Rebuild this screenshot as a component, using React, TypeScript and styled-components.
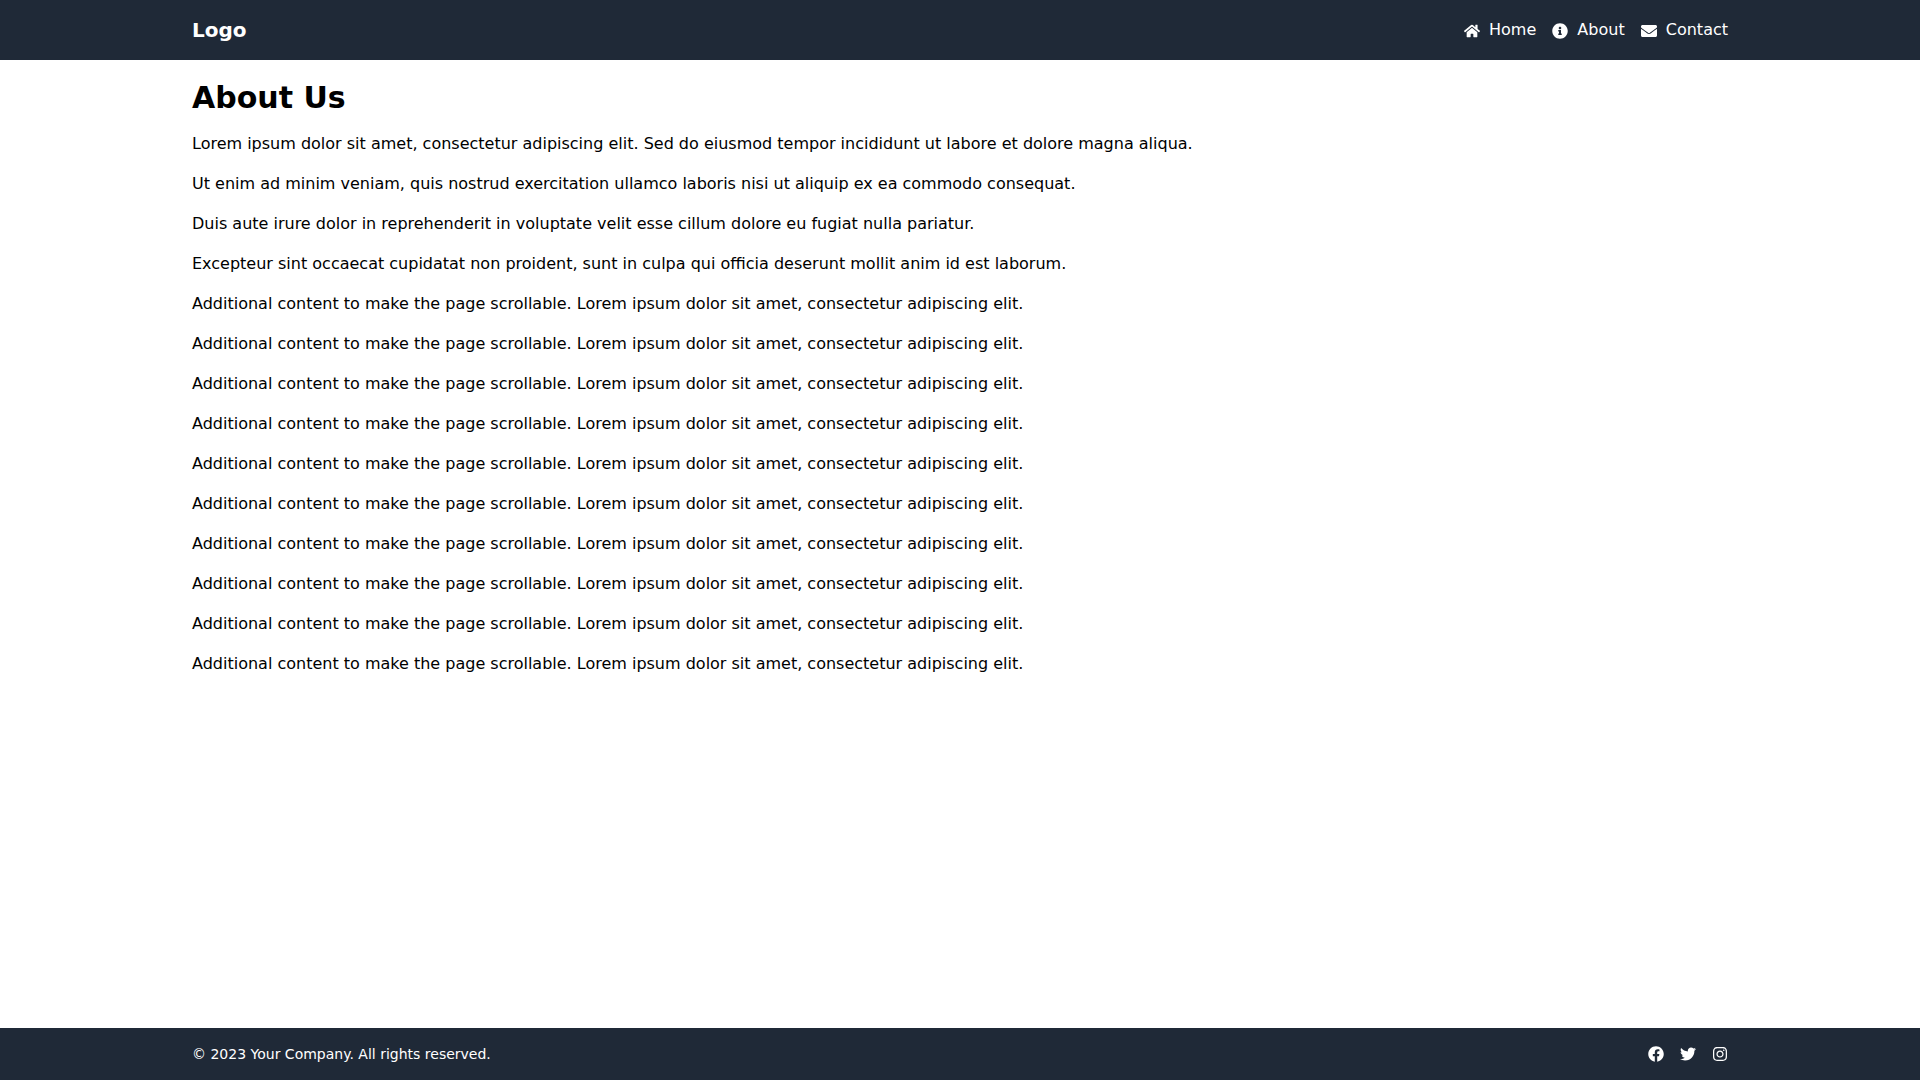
import React from "react";
import styled, { createGlobalStyle } from "styled-components";
import { FaHome, FaInfoCircle, FaEnvelope, FaFacebook, FaTwitter, FaInstagram } from "react-icons/fa";

const GlobalStyle = createGlobalStyle`
  *, *::before, *::after { box-sizing: border-box; }
  body {
    margin: 0;
    background: #ffffff;
    color: #000000;
    font-family: "DejaVu Sans", sans-serif;
    font-size: 16px;
    line-height: 24px;
  }
  h1, p, ul { margin: 0; padding: 0; }
  ul { list-style: none; }
  a { color: inherit; text-decoration: none; }
`;

const Page = styled.div`
  display: flex;
  flex-direction: column;
  min-height: 100vh;
`;

const Container = styled.div`
  width: 80%;
  margin: 0 auto;
`;

const Bar = styled(Container)`
  display: flex;
  align-items: center;
  justify-content: space-between;
`;

const Header = styled.header`
  padding: 16px 0;
  background: #1f2937;
  color: #ffffff;
`;

const Logo = styled.a`
  font-size: 20px;
  line-height: 28px;
  font-weight: 700;
`;

const LinkList = styled.ul`
  display: flex;
  gap: 16px;
`;

const NavLink = styled.a`
  display: block;

  svg {
    display: inline-block;
    margin-right: 4px;
    vertical-align: middle;
  }
`;

const Main = styled.main`
  flex: 1;
  padding: 20px 0;
`;

const Title = styled.h1`
  margin-bottom: 16px;
  font-size: 30px;
  line-height: 36px;
  font-weight: 700;
`;

const Paragraph = styled.p`
  margin-bottom: 16px;
`;

const Footer = styled.footer`
  padding: 16px 0;
  background: #1f2937;
  color: #ffffff;
`;

const Copyright = styled.p`
  font-size: 14px;
  line-height: 20px;
`;

const SocialLink = styled.a`
  display: block;

  svg {
    display: block;
  }
`;

const navigation = [
  { label: "Home", Icon: FaHome },
  { label: "About", Icon: FaInfoCircle },
  { label: "Contact", Icon: FaEnvelope },
];

const social = [
  { label: "Facebook", Icon: FaFacebook },
  { label: "Twitter", Icon: FaTwitter },
  { label: "Instagram", Icon: FaInstagram },
];

const paragraphs: string[] = [
  "Lorem ipsum dolor sit amet, consectetur adipiscing elit. Sed do eiusmod tempor incididunt ut labore et dolore magna aliqua.",
  "Ut enim ad minim veniam, quis nostrud exercitation ullamco laboris nisi ut aliquip ex ea commodo consequat.",
  "Duis aute irure dolor in reprehenderit in voluptate velit esse cillum dolore eu fugiat nulla pariatur.",
  "Excepteur sint occaecat cupidatat non proident, sunt in culpa qui officia deserunt mollit anim id est laborum.",
  ...Array<string>(10).fill(
    "Additional content to make the page scrollable. Lorem ipsum dolor sit amet, consectetur adipiscing elit."
  ),
];

export default function App() {
  return (
    <Page>
      <GlobalStyle />
      <Header>
        <Bar>
          <Logo href="#">Logo</Logo>
          <nav>
            <LinkList>
              {navigation.map(({ label, Icon }) => (
                <li key={label}>
                  <NavLink href="#">
                    <Icon size={16} aria-hidden="true" /> {label}
                  </NavLink>
                </li>
              ))}
            </LinkList>
          </nav>
        </Bar>
      </Header>
      <Main>
        <Container>
          <Title>About Us</Title>
          {paragraphs.map((text, index) => (
            <Paragraph key={index}>{text}</Paragraph>
          ))}
        </Container>
      </Main>
      <Footer>
        <Bar>
          <Copyright>© 2023 Your Company. All rights reserved.</Copyright>
          <LinkList>
            {social.map(({ label, Icon }) => (
              <li key={label}>
                <SocialLink href="#" aria-label={label}>
                  <Icon size={16} aria-hidden="true" />
                </SocialLink>
              </li>
            ))}
          </LinkList>
        </Bar>
      </Footer>
    </Page>
  );
}
